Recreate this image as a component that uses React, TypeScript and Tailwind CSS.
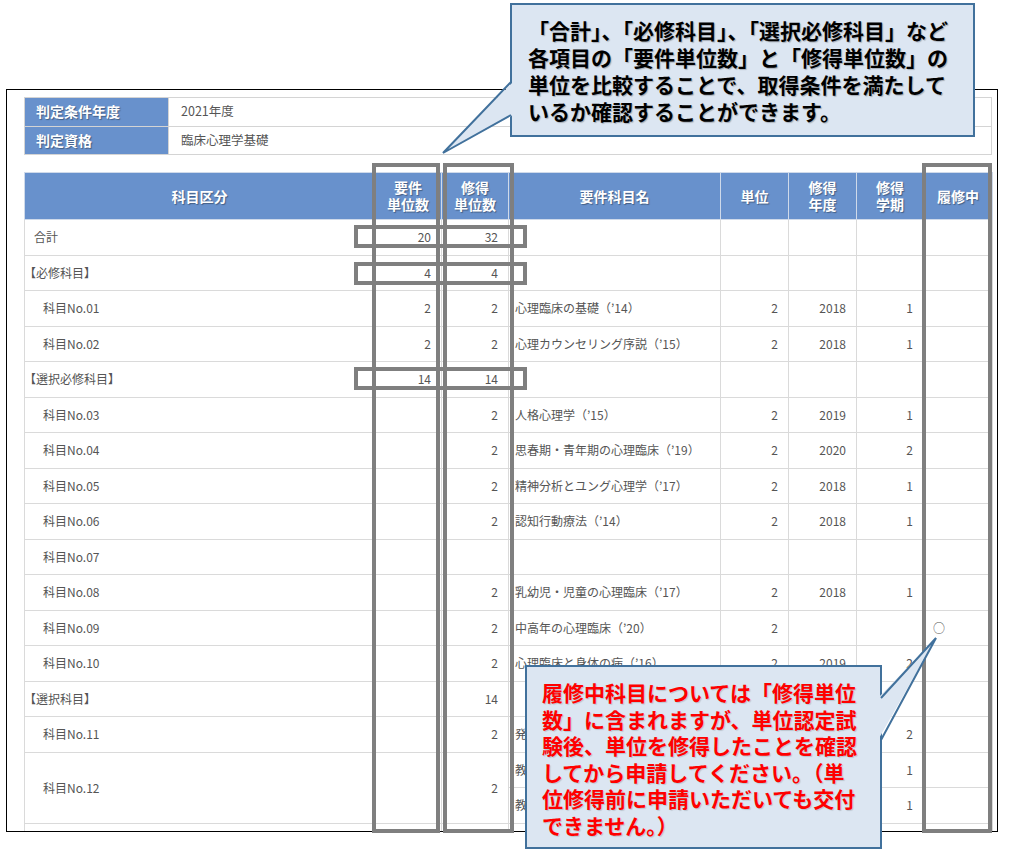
import React from 'react';

type Course = { name: string; unit: string; year: string; term: string; now?: boolean };
type Row = {
  kind: 'total' | 'group' | 'item';
  label: string;
  req?: string;
  got?: string;
  courses?: Course[];
};

const c = (name: string, unit: string, year: string, term: string, now?: boolean): Course => ({
  name,
  unit,
  year,
  term,
  now,
});

// 判定対象の科目一覧（No.12 は要件科目が2つ）
const rows: Row[] = [
  { kind: 'total', label: '合計', req: '20', got: '32' },
  { kind: 'group', label: '【必修科目】', req: '4', got: '4' },
  { kind: 'item', label: '科目No.01', req: '2', got: '2', courses: [c('心理臨床の基礎（’14）', '2', '2018', '1')] },
  { kind: 'item', label: '科目No.02', req: '2', got: '2', courses: [c('心理カウンセリング序説（’15）', '2', '2018', '1')] },
  { kind: 'group', label: '【選択必修科目】', req: '14', got: '14' },
  { kind: 'item', label: '科目No.03', got: '2', courses: [c('人格心理学（’15）', '2', '2019', '1')] },
  { kind: 'item', label: '科目No.04', got: '2', courses: [c('思春期・青年期の心理臨床（’19）', '2', '2020', '2')] },
  { kind: 'item', label: '科目No.05', got: '2', courses: [c('精神分析とユング心理学（’17）', '2', '2018', '1')] },
  { kind: 'item', label: '科目No.06', got: '2', courses: [c('認知行動療法（’14）', '2', '2018', '1')] },
  { kind: 'item', label: '科目No.07' },
  { kind: 'item', label: '科目No.08', got: '2', courses: [c('乳幼児・児童の心理臨床（’17）', '2', '2018', '1')] },
  { kind: 'item', label: '科目No.09', got: '2', courses: [c('中高年の心理臨床（’20）', '2', '', '', true)] },
  { kind: 'item', label: '科目No.10', got: '2', courses: [c('心理臨床と身体の病（’16）', '2', '2019', '2')] },
  { kind: 'group', label: '【選択科目】', got: '14' },
  { kind: 'item', label: '科目No.11', got: '2', courses: [c('発達心理学特論（’15）', '2', '2019', '2')] },
  {
    kind: 'item',
    label: '科目No.12',
    got: '2',
    courses: [c('教育心理学概論（’18）', '1', '2019', '1'), c('教育・学校心理学（’20）', '1', '2020', '1')],
  },
  { kind: 'item', label: '科目No.13', got: '2', courses: [c('学習・言語心理学（’17）', '2', '2019', '1')] },
];

const td = 'border border-[#dadada] p-0 text-[12px] text-[#555]';
const num = `${td} pr-[10px] text-right`;
const th =
  'border border-[#cfdaea] bg-[#6891cc] p-0 text-center text-[14px] font-bold leading-[17px] text-white [text-shadow:1px_1px_1px_rgba(0,0,0,0.35)]';

function CourseCells({ course }: { course?: Course }) {
  return (
    <>
      <td className={`${td} pl-[6px] whitespace-nowrap`}>{course?.name}</td>
      <td className={num}>{course?.unit}</td>
      <td className={num}>{course?.year}</td>
      <td className={num}>{course?.term}</td>
      <td className={`${td} pl-[9px]`}>{course?.now ? '○' : ''}</td>
    </>
  );
}

function BodyRows() {
  return (
    <>
      {rows.map((r) => {
        const courses = r.courses ?? [];
        const span = Math.max(courses.length, 1);
        const labelPad =
          r.kind === 'total'
            ? 'pl-[9px]'
            : r.kind === 'group'
              ? 'pl-[5px] [text-spacing-trim:trim-start]'
              : 'pl-[18px]';
        return (
          <React.Fragment key={r.label}>
            <tr className="h-[35.5px]">
              <td rowSpan={span} className={`${td} ${labelPad}`}>
                {r.label}
              </td>
              <td rowSpan={span} className={num}>
                {r.req}
              </td>
              <td rowSpan={span} className={num}>
                {r.got}
              </td>
              <CourseCells course={courses[0]} />
            </tr>
            {courses.slice(1).map((co) => (
              <tr key={co.name} className="h-[35.5px]">
                <CourseCells course={co} />
              </tr>
            ))}
          </React.Fragment>
        );
      })}
    </>
  );
}

function InfoTable() {
  return (
    <table className="w-[968px] table-fixed border-collapse">
      <colgroup>
        <col className="w-[144px]" />
        <col />
      </colgroup>
      <tbody>
        {[
          ['判定条件年度', '2021年度'],
          ['判定資格', '臨床心理学基礎'],
        ].map(([k, v]) => (
          <tr key={k} className="h-[28.5px]">
            <th className="border border-[#d4d4d4] bg-[#6891cc] p-0 pl-[11px] text-left text-[14px] font-bold text-white [text-shadow:1px_1px_1px_rgba(0,0,0,0.35)]">
              {k}
            </th>
            <td className="border border-[#d4d4d4] p-0 pl-[12px] text-[12.5px] text-[#555]">{v}</td>
          </tr>
        ))}
      </tbody>
    </table>
  );
}

function MainTable() {
  return (
    <table className="mt-[17px] w-[968px] table-fixed border-collapse">
      <colgroup>
        <col className="w-[350px]" />
        <col className="w-[67px]" />
        <col className="w-[67px]" />
        <col className="w-[212px]" />
        <col className="w-[68px]" />
        <col className="w-[68px]" />
        <col className="w-[67px]" />
        <col className="w-[69px]" />
      </colgroup>
      <thead>
        <tr className="h-[47px]">
          <th className={th}>科目区分</th>
          <th className={th}>
            要件
            <br />
            単位数
          </th>
          <th className={th}>
            修得
            <br />
            単位数
          </th>
          <th className={th}>要件科目名</th>
          <th className={th}>単位</th>
          <th className={th}>
            修得
            <br />
            年度
          </th>
          <th className={th}>
            修得
            <br />
            学期
          </th>
          <th className={th}>履修中</th>
        </tr>
      </thead>
      <tbody>
        <BodyRows />
      </tbody>
    </table>
  );
}

export default function App() {
  return (
    <div className="relative h-[853px] w-[1013px] overflow-hidden bg-white font-['Noto_Sans_CJK_JP','Noto_Sans',sans-serif]">
      <div className="pl-[6px] pt-[89px]">
        <div className="h-[743px] w-[992px] overflow-hidden border border-black pl-[17px] pr-[5px] pt-[7px]">
          <InfoTable />
          <MainTable />
        </div>
      </div>

      {/* 注目箇所の枠 */}
      <div className="absolute left-[372px] top-[163px] h-[670px] w-[68px] border-4 border-[#7f7f7f]" />
      <div className="absolute left-[443px] top-[163px] h-[670px] w-[71px] border-4 border-[#7f7f7f]" />
      <div className="absolute left-[922px] top-[163px] h-[670px] w-[70px] border-4 border-[#7f7f7f]" />
      <div className="absolute left-[354px] top-[225px] h-[23px] w-[173px] border-4 border-[#7f7f7f]" />
      <div className="absolute left-[354px] top-[262px] h-[23px] w-[173px] border-4 border-[#7f7f7f]" />
      <div className="absolute left-[354px] top-[367px] h-[23px] w-[173px] border-4 border-[#7f7f7f]" />

      {/* 吹き出し（上） */}
      <div className="absolute left-[510px] top-[3px] h-[134px] w-[465px] whitespace-nowrap border-2 border-[#41719c] bg-[#dce6f2] pl-[16px] pt-[12px] text-[21px] font-bold leading-[27px] text-black [text-shadow:1px_1px_1px_rgba(0,0,0,0.25)]">
        「合計」、「必修科目」、「選択必修科目」など
        <br />
        各項目の「要件単位数」と「修得単位数」の
        <br />
        単位を比較することで、取得条件を満たして
        <br />
        いるか確認することができます。
      </div>
      <svg className="absolute left-[440px] top-[78px]" width="76" height="80" viewBox="0 0 76 80">
        <polygon points="73,4 3,75 73,37" fill="#dce6f2" />
        <polyline points="71,4 3,75 71,37" fill="none" stroke="#41719c" strokeWidth="2" strokeLinejoin="miter" />
      </svg>

      {/* 吹き出し（下） */}
      <div className="absolute left-[525px] top-[665px] h-[184px] w-[357px] whitespace-nowrap border-2 border-[#41719c] bg-[#dce6f2] pl-[15px] pt-[12px] text-[21px] font-bold leading-[26.6px] text-[#ff0000] [text-shadow:1px_1px_1px_rgba(0,0,0,0.15)]">
        履修中科目については「修得単位
        <br />
        数」に含まれますが、単位認定試
        <br />
        験後、単位を修得したことを確認
        <br />
        してから申請してください。（単
        <br />
        位修得前に申請いただいても交付
        <br />
        できません。）
      </div>
      <svg className="absolute left-[876px] top-[634px]" width="64" height="110" viewBox="0 0 64 110">
        <polygon points="2,64 60,4 2,106" fill="#dce6f2" />
        <polyline points="5,64 60,4 5,106" fill="none" stroke="#41719c" strokeWidth="2" />
      </svg>
    </div>
  );
}
